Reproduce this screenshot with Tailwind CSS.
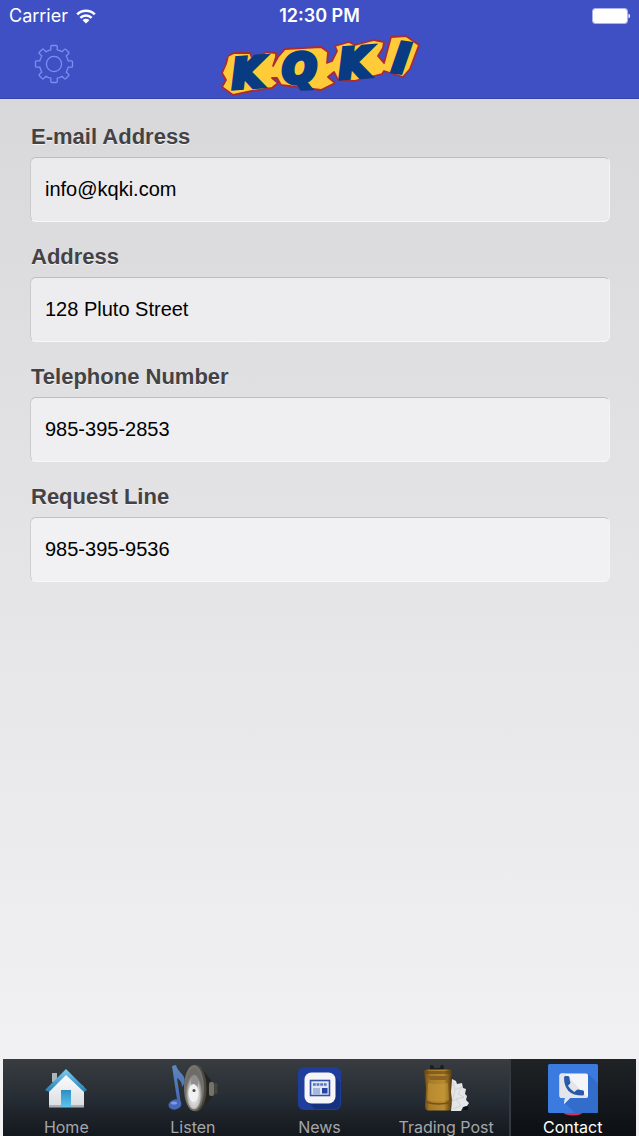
<!DOCTYPE html>
<html lang="en">
<head>
<meta charset="utf-8">
<meta name="viewport" content="width=device-width, initial-scale=1">
<title>KQKI Contact</title>
<script src="https://cdn.jsdelivr.net/npm/@tailwindcss/browser@4"></script>
</head>
<body class="flex min-h-screen flex-col bg-linear-to-b from-[#d6d5d7] to-[#f3f2f5] font-['Liberation_Sans',sans-serif]">

<header class="border-b border-[#3543a6] bg-[#3f50c4] font-['Inter',sans-serif] text-white">
  <div class="grid h-8 grid-cols-3 items-center px-[9px] text-lg leading-6">
    <div class="flex items-center gap-2">
      <span>Carrier</span>
      <svg class="h-[15px] w-5" viewBox="0 0 20 15" fill="none" stroke="#fff" stroke-width="2.6" aria-label="Wi-Fi">
        <path d="M1.2 5.4a12.4 12.4 0 0 1 17.6 0M4.4 8.8a7.9 7.9 0 0 1 11.2 0"/>
        <path d="M10 14.6 6.6 11.2a4.8 4.8 0 0 1 6.8 0z" fill="#fff" stroke="none"/>
      </svg>
    </div>
    <time class="text-center font-semibold whitespace-nowrap">12:30 PM</time>
    <svg class="h-4 w-[38px] justify-self-end" viewBox="0 0 38 16" aria-label="Battery full">
      <rect x="0.5" y="0.5" width="35" height="15" rx="2.5" fill="none" stroke="#a9b1ee"/>
      <rect x="1" y="1" width="34" height="14" rx="2" fill="#fff"/>
      <path d="M36.5 5.5q1.5.8 1.5 2.5t-1.5 2.500z" fill="#fff"/>
    </svg>
  </div>
  <div class="grid h-[66px] grid-cols-3 items-center">
    <button type="button" aria-label="Settings" class="mb-[3px] ml-[34px] size-10 justify-self-start">
      <svg class="size-10" viewBox="0 0 40 40" fill="none" stroke="#7c8ff0" stroke-width="1.3" stroke-linejoin="round">
        <circle cx="20" cy="20" r="7.600"/>
        <path d="M16.8 5.800V2.500Q16.800 1.500 17.800 1.500H22.200Q23.200 1.500 23.200 2.500V5.800Q26 6.400 28 7.800L30.400 5.400Q31.100 4.700 31.800 5.400L34.600 8.200Q35.300 8.900 34.600 9.600L32.200 12Q33.600 14 34.200 16.800H37.500Q38.500 16.800 38.500 17.800V22.200Q38.500 23.200 37.500 23.200H34.200Q33.600 26 32.200 28L34.600 30.400Q35.300 31.100 34.600 31.800L31.800 34.600Q31.100 35.300 30.400 34.600L28 32.200Q26 33.600 23.200 34.200V37.500Q23.200 38.500 22.200 38.500H17.800Q16.800 38.500 16.800 37.500V34.200Q14 33.600 12 32.200L9.600 34.600Q8.900 35.300 8.200 34.600L5.400 31.800Q4.700 31.100 5.400 30.400L7.800 28Q6.400 26 5.800 23.200H2.500Q1.500 23.200 1.500 22.200V17.800Q1.500 16.800 2.500 16.800H5.800Q6.400 14 7.800 12L5.400 9.600Q4.700 8.900 5.400 8.200L8.200 5.400Q8.900 4.700 9.600 5.400L12 7.800Q14 6.400 16.800 5.800Z"/>
      </svg>
    </button>
    <svg class="h-[66px] w-[204px] justify-self-center overflow-visible" viewBox="0 0 204 66" aria-label="KQKI">
      <path d="M10 24 16 21 32 21 34 26 49 20 58 21 58 25 55 34 60 25 67 17 103 15 110 20 109 31 114 29 119 19 117 14 131 10 137 13 156 8 166 10 165 16 160 24 166 31 173 5 188 4 201 13 192 37 185 45 166 39 164 42 136 49 120 48 116 40 110 45 117 51 103 58 63 53 59 46 54 46 60 51 54 56 34 59 15 63 4 55 8 48 4 41 8 32Z" fill="#ffcb38" stroke="#a82b38" stroke-width="1.800" stroke-linejoin="round"/>
      <text x="15 65 122 174" y="56 51 46 39" rotate="-4 -2 -4 8" fill="#083b82" stroke="#083b82" stroke-width="5" stroke-linejoin="miter" stroke-miterlimit="3" font-family="DejaVu Sans" font-weight="bold" font-style="italic" font-size="40">KQKI</text>
    </svg>
  </div>
</header>

<main class="pt-[26px] pr-[29px] pb-6 pl-[30px]">
  <form class="flex flex-col gap-[23px]">
    <div>
      <label for="email" class="mb-2 block pl-px text-[22px] leading-6 font-bold text-[#434245] text-shadow-[0_1px_0_#f4f4f6]">E-mail Address</label>
      <input id="email" type="text" value="info@kqki.com" class="block h-[65px] w-full rounded-md border border-t-[#bdbcbf] border-r-[#f4f4f6] border-b-[#f8f8fa] border-l-[#cbcacd] bg-[#ebeaed] px-[14px] text-xl text-black outline-none">
    </div>
    <div>
      <label for="address" class="mb-2 block pl-px text-[22px] leading-6 font-bold text-[#434245] text-shadow-[0_1px_0_#f4f4f6]">Address</label>
      <input id="address" type="text" value="128 Pluto Street" class="block h-[65px] w-full rounded-md border border-t-[#bdbcbf] border-r-[#f4f4f6] border-b-[#f8f8fa] border-l-[#cbcacd] bg-[#edecef] px-[14px] text-xl text-black outline-none">
    </div>
    <div>
      <label for="phone" class="mb-2 block pl-px text-[22px] leading-6 font-bold text-[#434245] text-shadow-[0_1px_0_#f4f4f6]">Telephone Number</label>
      <input id="phone" type="tel" value="985-395-2853" class="block h-[65px] w-full rounded-md border border-t-[#bdbcbf] border-r-[#f4f4f6] border-b-[#f8f8fa] border-l-[#cbcacd] bg-[#efeef1] px-[14px] text-xl text-black outline-none">
    </div>
    <div>
      <label for="request" class="mb-2 block pl-px text-[22px] leading-6 font-bold text-[#434245] text-shadow-[0_1px_0_#f4f4f6]">Request Line</label>
      <input id="request" type="tel" value="985-395-9536" class="block h-[65px] w-full rounded-md border border-t-[#c2c1c4] border-r-[#f4f4f6] border-b-[#f8f8fa] border-l-[#cfced1] bg-[#f1f0f3] px-[14px] text-xl text-black outline-none">
    </div>
  </form>
</main>

<nav class="mx-[3px] mt-auto grid grid-cols-5 bg-linear-to-b from-[#393d41] via-[#272d34] to-[#14181f] font-['Inter',sans-serif] text-base leading-[18px] text-[#a5a7aa]">
  <a href="#home" class="flex flex-col items-center gap-1 pt-[5px]">
    <svg class="size-[50px]" viewBox="0 0 50 50" aria-hidden="true">
      <defs>
        <linearGradient id="wall" x2="0" y2="1"><stop stop-color="#fff"/><stop offset="1" stop-color="#d9dde0"/></linearGradient>
        <linearGradient id="door" x2="0" y2="1"><stop stop-color="#2e8fc0"/><stop offset="1" stop-color="#5cc3ee"/></linearGradient>
        <linearGradient id="roof" x2="0" y2="1"><stop stop-color="#7fcdf0"/><stop offset="1" stop-color="#2180b4"/></linearGradient>
      </defs>
      <path d="M11 9h5v9h-5z" fill="#aeb5b9"/>
      <path d="M8 23 25 8l18 15v20H8z" fill="url(#wall)"/>
      <path d="M8 41h35v2.500H8z" fill="#aab0b4"/>
      <path d="M20 26h10v17H20z" fill="url(#door)"/>
      <path d="M25 5 46 26l-3 2-18-17L8 28l-4-2z" fill="url(#roof)"/>
    </svg>
    <span>Home</span>
  </a>
  <a href="#listen" class="flex flex-col items-center gap-1 pt-[5px]">
    <svg class="size-[50px]" viewBox="0 0 50 50" aria-hidden="true">
      <defs>
        <radialGradient id="cone" cx=".5" cy=".65"><stop stop-color="#fff"/><stop offset=".65" stop-color="#c6c6c4"/><stop offset="1" stop-color="#6d6c68"/></radialGradient>
        <linearGradient id="note" x2="0" y2="1"><stop stop-color="#5d88bd"/><stop offset="1" stop-color="#4465b6"/></linearGradient>
      </defs>
      <path d="M33 4 43 16 44 34 34 44z" fill="#25241f"/>
      <rect x="41" y="18" width="5" height="14" rx="2" fill="#74736b"/>
      <rect x="46" y="19" width="3.500" height="11" rx="1.500" fill="#45453f"/>
      <ellipse cx="28" cy="24" rx="10.500" ry="23.500" fill="#4b4943"/>
      <ellipse cx="26" cy="24" rx="10" ry="23" fill="#77746c"/>
      <ellipse cx="26" cy="24.500" rx="8.500" ry="20.500" fill="url(#cone)"/>
      <ellipse cx="26.500" cy="19" rx="3.500" ry="8" fill="#8f8f8f"/>
      <ellipse cx="25.500" cy="29" rx="5" ry="9" fill="#f1f1f1"/>
      <circle cx="26" cy="26.500" r="1.500" fill="#484848"/>
      <path d="M4 2 8 1c1 6 8 9 8.500 14 .3 3-.5 6-2.500 8 0-5-2-7-5-9l4 26-3 2z" fill="url(#note)"/>
      <ellipse cx="7" cy="40.500" rx="6.500" ry="5" fill="#4668bd" transform="rotate(-15 7 40.500)"/>
      <ellipse cx="6" cy="39" rx="3" ry="1.500" fill="#819cdd"/>
    </svg>
    <span>Listen</span>
  </a>
  <a href="#news" class="flex flex-col items-center gap-1 pt-[5px]">
    <svg class="size-[50px]" viewBox="0 0 50 50" aria-hidden="true">
      <rect x="4" y="3" width="43" height="43" rx="6" fill="#1e3d9c"/>
      <path d="M39 11 46 18v21q0 6-6 6H21l-7-7z" fill="#16317f"/>
      <rect x="10.500" y="8.500" width="31" height="31" rx="7" fill="#f6f6f8"/>
      <rect x="16.500" y="16.500" width="19" height="15" fill="#e2e7f6" stroke="#3350a8" stroke-width="1.600"/>
      <path d="M19 20.500h14" fill="none" stroke="#5a74bd" stroke-width="2.500" stroke-dasharray="2.800 .8"/>
      <path d="M19 25h7m-7 2h7m-7 2h7" stroke="#6f86c6"/>
      <path d="M28 24h5.500v5.500H28z" fill="#2444a3"/>
    </svg>
    <span>News</span>
  </a>
  <a href="#trading" class="flex flex-col items-center gap-1 pt-[5px] whitespace-nowrap">
    <svg class="size-[50px]" viewBox="0 0 50 50" aria-hidden="true">
      <defs>
        <linearGradient id="bag" x2="1"><stop stop-color="#64430f"/><stop offset=".2" stop-color="#a77a27"/><stop offset=".7" stop-color="#b88b30"/><stop offset="1" stop-color="#4c300c"/></linearGradient>
      </defs>
      <path d="M9 8V2q0-1 2-1t2 3h6q0-3 2-3t2 2v6z" fill="#1b1e22"/>
      <path d="M3 7q1-2 6-1.500h19q3 0 3 2.500l-1 14 1.500 20q0 4-3 4.500H7q-3-.5-3-4L5 24z" fill="url(#bag)"/>
      <path d="M4 7h26v3H4z" fill="#694617" opacity=".6"/>
      <path d="M5 10l4 6h16l5-6-3 2H8z" fill="#8a6223"/>
      <path d="M7 19q10 2 20 0l1 17q-10 3-22 0z" fill="#cf9f3b" opacity=".45"/>
      <path d="M5 38q12 4 26 0" stroke="#74511a" stroke-width="1.500" fill="none"/>
      <path d="m31 15 4 2 1 3 5-1 1 5 3 1-1 5 2 2-1 4 3 3-2 3-4 1-2 4H30l1-10-1-9z" fill="#e4e5e6"/>
      <path d="m32 18 2 8 7-3-4 7 6 3-8 2 5 7-8 3M34 26l-3 12 4-3" fill="none" stroke="#cccdcf" stroke-width=".8"/>
      <path d="m43 43 4-1v4h-5z" fill="#0b0d10"/>
    </svg>
    <span>Trading Post</span>
  </a>
  <a href="#contact" aria-current="page" class="flex flex-col items-center gap-1 bg-linear-to-b from-[#202326] to-[#0c1015] pt-[5px] text-white shadow-[inset_2px_0_0_#353a40]">
    <svg class="size-[50px] overflow-visible" viewBox="0 0 50 50" aria-hidden="true">
      <ellipse cx="25" cy="48" rx="10" ry="3.500" fill="#d92f50"/>
      <rect width="50" height="49" rx="1.500" fill="#3b7be0"/>
      <path d="M40 10 50 19v28.500q0 1.500-1.500 1.500H27L16 38z" fill="#326dcc"/>
      <path d="M13.500 9.500h24.500q2 0 2 2V32q0 2-2 2H22l-6 6 1-6h-3.500q-2 0-2-2V11.500q0-2 2-2z" fill="#f4f5f8"/>
      <path d="M13.500 9.500H17L39.500 33q-.5 1-1.500 1H22l-6 6 1-6h-3.500q-2 0-2-2V11.500q0-2 2-2z" fill="#e3e5ea"/>
      <path d="M16 13.500q0-1.500 1.500-1.500H20q1.500 0 1.500 1.500 0 2.500.8 4.500.4 1-.4 1.800L20 21.700q2.300 4 6.400 6.200l2.200-2q.8-.7 1.800-.4 2 .7 4.100.7 1.500 0 1.500 1.500V30q0 1.500-1.500 1.500Q25 31.500 20.500 27 16 22 16 13.500z" fill="#285aa9"/>
    </svg>
    <span>Contact</span>
  </a>
</nav>

</body>
</html>
